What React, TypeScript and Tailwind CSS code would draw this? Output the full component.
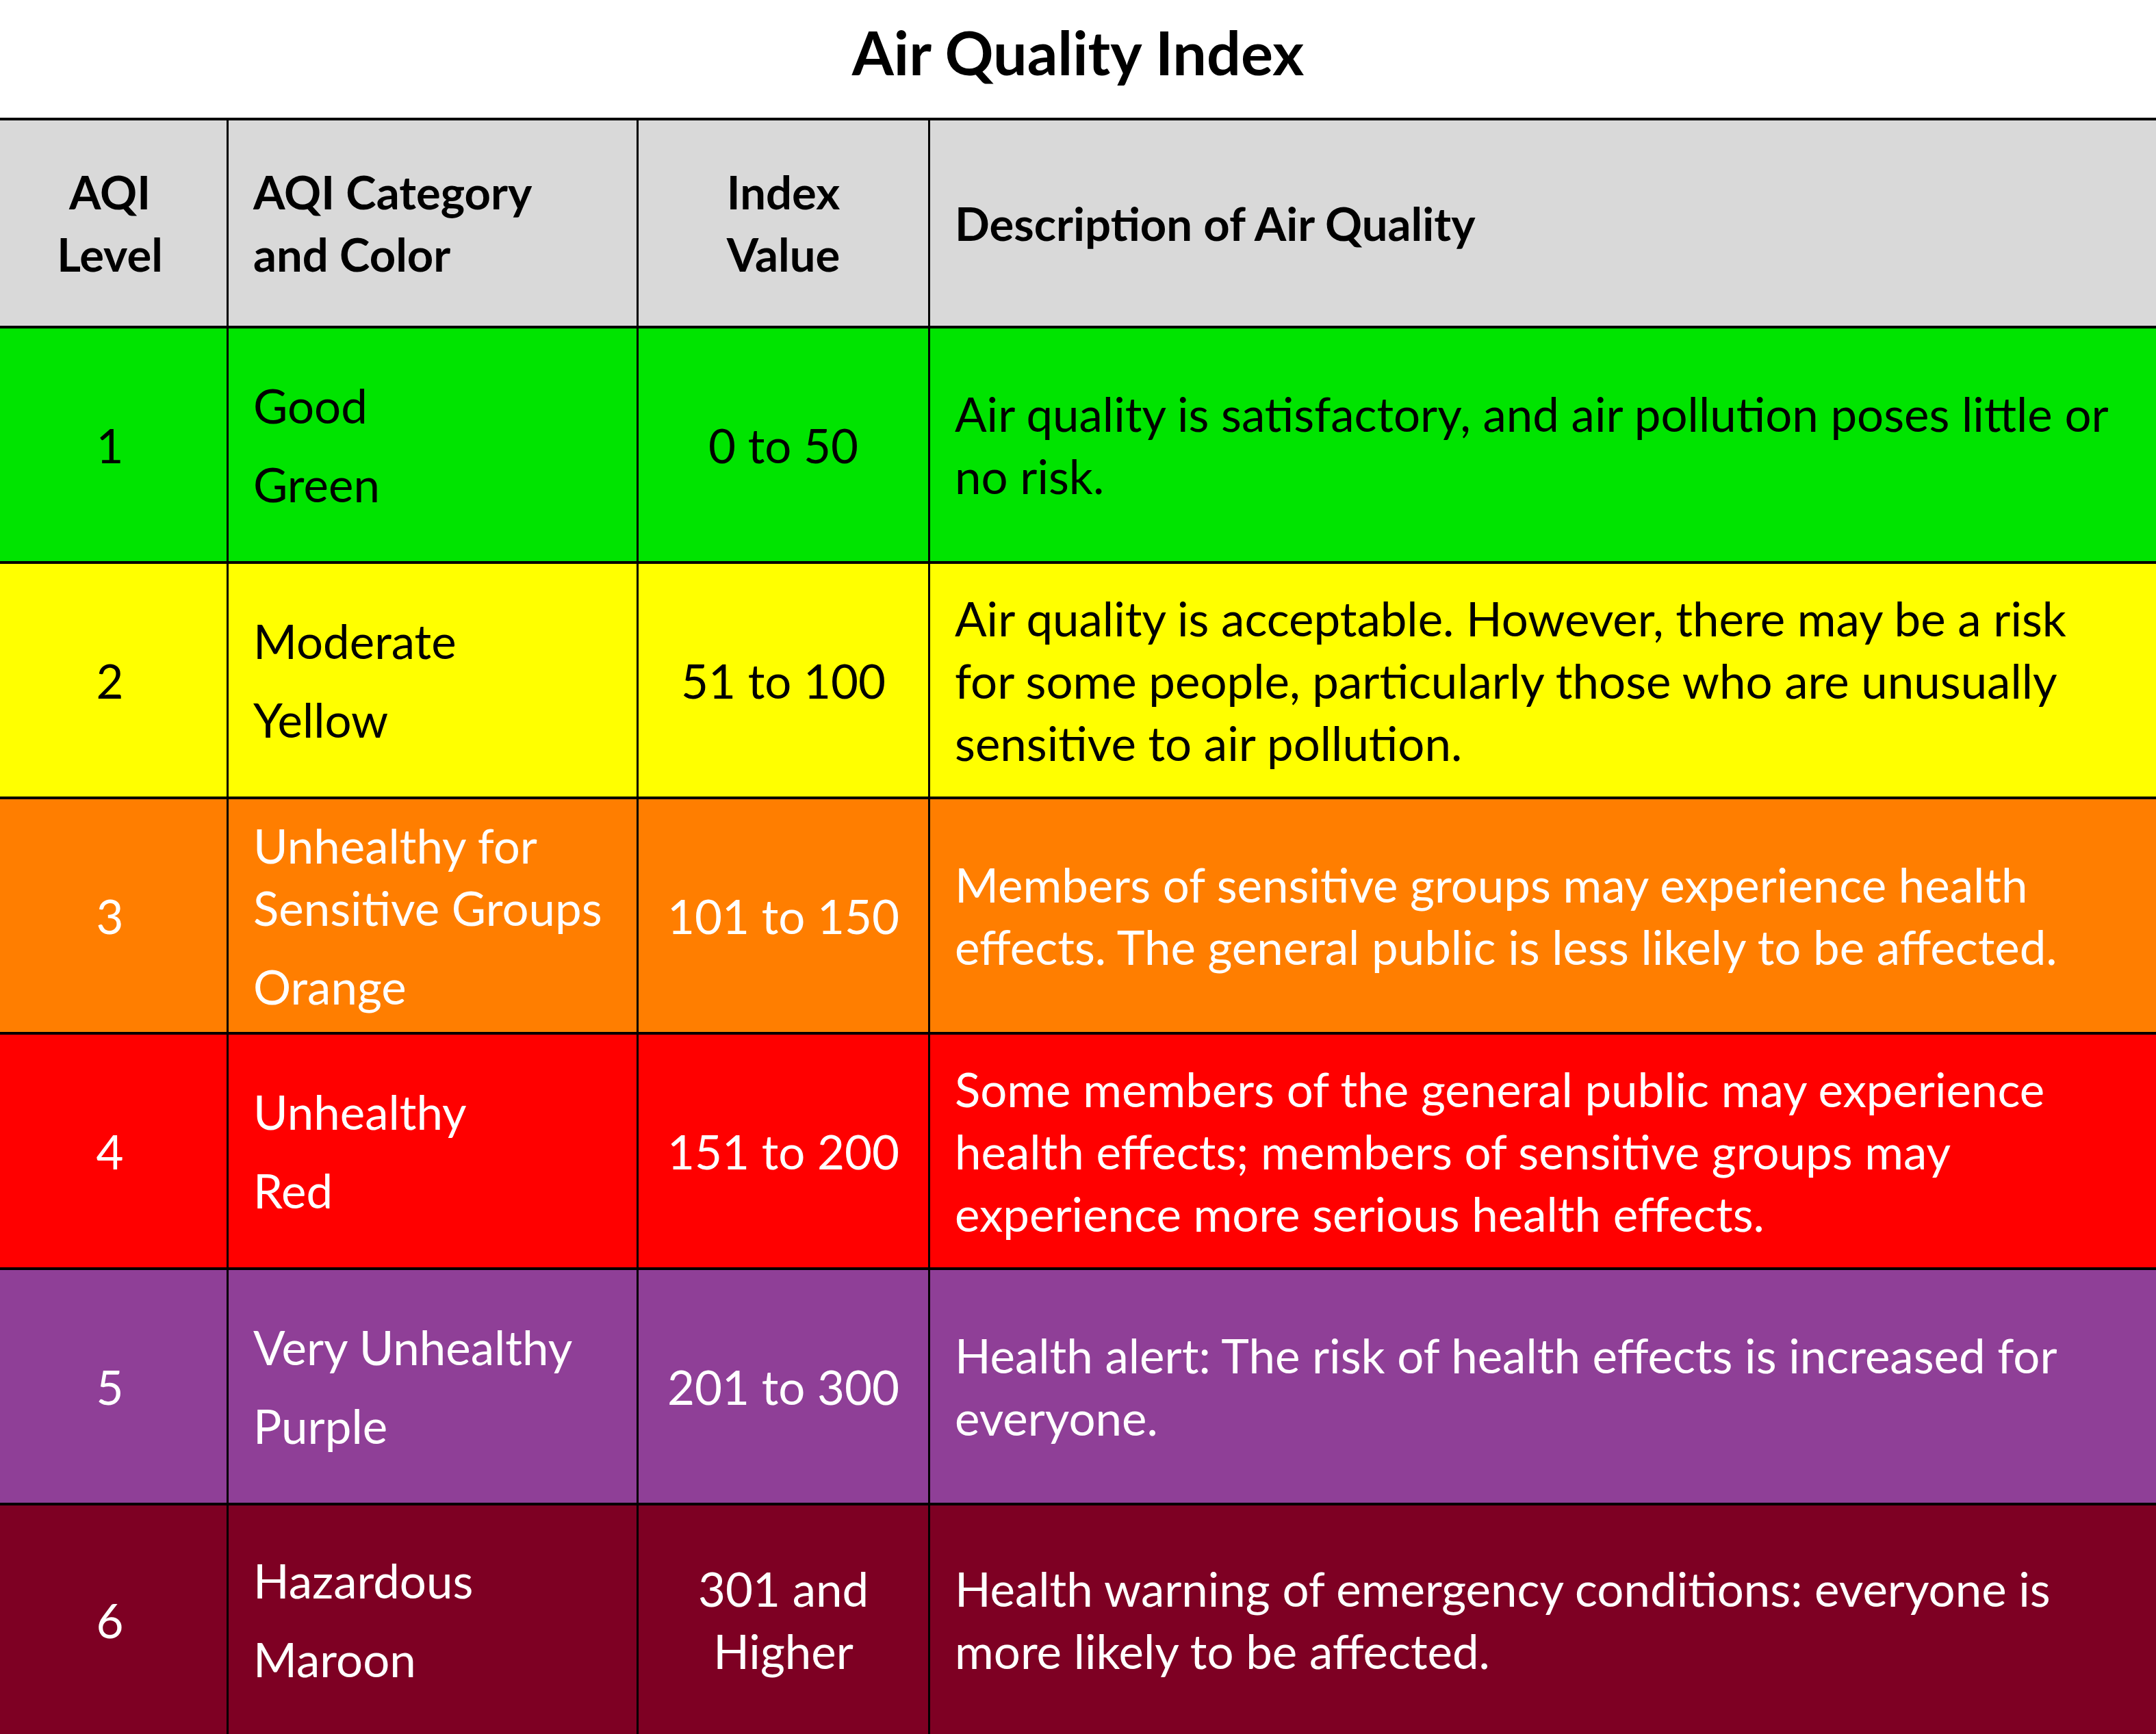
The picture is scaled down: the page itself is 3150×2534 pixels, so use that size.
const rows = [
  {
    level: '1',
    category: [['Good'], ['Green']],
    index: ['0 to 50'],
    desc: ['Air quality is satisfactory, and air pollution poses little or', 'no risk.'],
    bg: 'bg-[#00e400]',
    text: 'text-black',
  },
  {
    level: '2',
    category: [['Moderate'], ['Yellow']],
    index: ['51 to 100'],
    desc: [
      'Air quality is acceptable. However, there may be a risk',
      'for some people, particularly those who are unusually',
      'sensitive to air pollution.',
    ],
    bg: 'bg-[#ffff00]',
    text: 'text-black',
  },
  {
    level: '3',
    category: [['Unhealthy for', 'Sensitive Groups'], ['Orange']],
    index: ['101 to 150'],
    desc: [
      'Members of sensitive groups may experience health',
      'effects. The general public is less likely to be affected.',
    ],
    bg: 'bg-[#ff7e00]',
    text: 'text-white',
  },
  {
    level: '4',
    category: [['Unhealthy'], ['Red']],
    index: ['151 to 200'],
    desc: [
      'Some members of the general public may experience',
      'health effects; members of sensitive groups may',
      'experience more serious health effects.',
    ],
    bg: 'bg-[#ff0000]',
    text: 'text-white',
  },
  {
    level: '5',
    category: [['Very Unhealthy'], ['Purple']],
    index: ['201 to 300'],
    desc: ['Health alert: The risk of health effects is increased for', 'everyone.'],
    bg: 'bg-[#8f3f97]',
    text: 'text-white',
  },
  {
    level: '6',
    category: [['Hazardous'], ['Maroon']],
    index: ['301 and', 'Higher'],
    desc: ['Health warning of emergency conditions: everyone is', 'more likely to be affected.'],
    bg: 'bg-[#7e0023]',
    text: 'text-white',
  },
];

const Lines = ({ lines }: { lines: string[] }) => (
  <div>
    {lines.map((l) => (
      <div key={l} className="whitespace-nowrap">
        {l}
      </div>
    ))}
  </div>
);

const App = () => {
  return (
    <div className="w-[3150px] h-[2534px] overflow-hidden bg-white font-['Lato','Open_Sans',sans-serif] text-[69px] leading-[91px]">
      {/* Title */}
      <div className="h-[172px] flex items-center justify-center">
        <h1 className="text-[88px] font-bold text-black leading-none -mt-[20px]">Air Quality Index</h1>
      </div>

      {/* Header */}
      <div className="grid grid-cols-[331px_599px_426px_1fr] h-[304px] border-t-4 border-black bg-[#d9d9d9] font-bold text-black text-[67px]">
        <div className="flex items-center justify-center text-center pr-[10px]">
          <Lines lines={['AQI', 'Level']} />
        </div>
        <div className="flex items-center border-l-[3px] border-black pl-[36px]">
          <Lines lines={['AQI Category', 'and Color']} />
        </div>
        <div className="flex items-center justify-center text-center border-l-[3px] border-black">
          <Lines lines={['Index', 'Value']} />
        </div>
        <div className="flex items-center border-l-[3px] border-black pl-[36px]">
          <Lines lines={['Description of Air Quality']} />
        </div>
      </div>

      {/* Rows */}
      {rows.map((row, i) => (
        <div
          key={row.level}
          className={`grid grid-cols-[331px_599px_426px_1fr] border-t-4 border-black ${row.bg} ${row.text} ${
            i === rows.length - 1 ? 'h-[338px]' : 'h-[344px]'
          }`}
        >
          <div className="flex items-center justify-center pr-[10px]">{row.level}</div>
          <div className="flex flex-col justify-center gap-[24px] border-l-[3px] border-black pl-[36px]">
            {row.category.map((p) => (
              <Lines key={p[0]} lines={p} />
            ))}
          </div>
          <div className="flex items-center justify-center text-center border-l-[3px] border-black">
            <Lines lines={row.index} />
          </div>
          <div className="flex items-center border-l-[3px] border-black pl-[36px]">
            <Lines lines={row.desc} />
          </div>
        </div>
      ))}
    </div>
  );
};

export default App;
